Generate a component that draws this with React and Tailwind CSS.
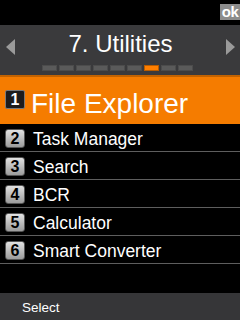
import React from "react";

const items = [
  { n: "2", label: "Task Manager" },
  { n: "3", label: "Search" },
  { n: "4", label: "BCR" },
  { n: "5", label: "Calculator" },
  { n: "6", label: "Smart Converter" },
];

export default function App() {
  const font = { fontFamily: '"Liberation Sans", Arial, sans-serif' };
  return (
    <div className="w-[240px] h-[320px] bg-black flex flex-col overflow-hidden" style={font}>
      {/* top status bar */}
      <div className="h-[25px] flex justify-end items-start shrink-0">
        <div className="mt-[4px] w-[20px] h-[16px] bg-[#8c8c8c] text-white font-bold text-[15px] leading-[15px] text-center tracking-[-0.5px]">
          ok
        </div>
      </div>

      {/* header */}
      <div className="h-[50px] bg-[#3a3a3c] flex items-start shrink-0">
        <div className="w-[15px] pl-[6px] pt-[14px]">
          <svg width="9" height="16" viewBox="0 0 9 16">
            <polygon points="9,0 9,16 0,8" fill="#9a9a9a" />
          </svg>
        </div>
        <div className="flex-1 flex flex-col items-center pt-[5px]">
          <div className="text-white text-[24px] leading-[28px]">7. Utilities</div>
          <div className="flex gap-[2px] mt-[7px] pr-[6px]">
            {[0, 1, 2, 3, 4, 5, 6, 7, 8].map((i) =>
              i === 6 ? (
                <div key={i} className="w-[15px] h-[6px] bg-[#ff7f00] border border-[#b85c00]" />
              ) : (
                <div key={i} className="w-[15px] h-[6px] bg-[#5a5a5a] border border-[#4c4c4c]" />
              )
            )}
          </div>
        </div>
        <div className="w-[14px] pt-[14px]">
          <svg width="9" height="16" viewBox="0 0 9 16">
            <polygon points="0,0 0,16 9,8" fill="#9a9a9a" />
          </svg>
        </div>
      </div>

      {/* selected row */}
      <div className="h-[49px] bg-[#f57c00] border-t-2 border-[#c26200] flex items-start pl-[5px] pt-[13px] gap-[6px] shrink-0">
        <div className="w-[20px] h-[19px] bg-[#1c1c1c] border border-[#7a7a7a] rounded-[2px] text-white font-bold text-[16px] leading-[17px] text-center">
          1
        </div>
        <div className="text-white text-[28px] leading-[28px] whitespace-nowrap">File Explorer</div>
      </div>

      {/* list */}
      {items.map((it) => (
        <div
          key={it.n}
          className="h-[28px] border-b border-[#5e5e5e] flex items-start pl-[5px] pt-[5px] gap-[8px] shrink-0"
        >
          <div className="w-[20px] h-[19px] bg-gradient-to-b from-[#e2e2e2] to-[#9c9c9c] border border-[#555] rounded-[3px] text-black font-bold text-[16px] leading-[17px] text-center">
            {it.n}
          </div>
          <div className="text-white text-[17.5px] leading-[20px] whitespace-nowrap">{it.label}</div>
        </div>
      ))}

      <div className="flex-1" />

      {/* bottom bar */}
      <div className="h-[27px] bg-[#363638] pl-[22px] pt-[7px] shrink-0">
        <div className="text-white text-[13.5px] leading-[15px]">Select</div>
      </div>
    </div>
  );
}
